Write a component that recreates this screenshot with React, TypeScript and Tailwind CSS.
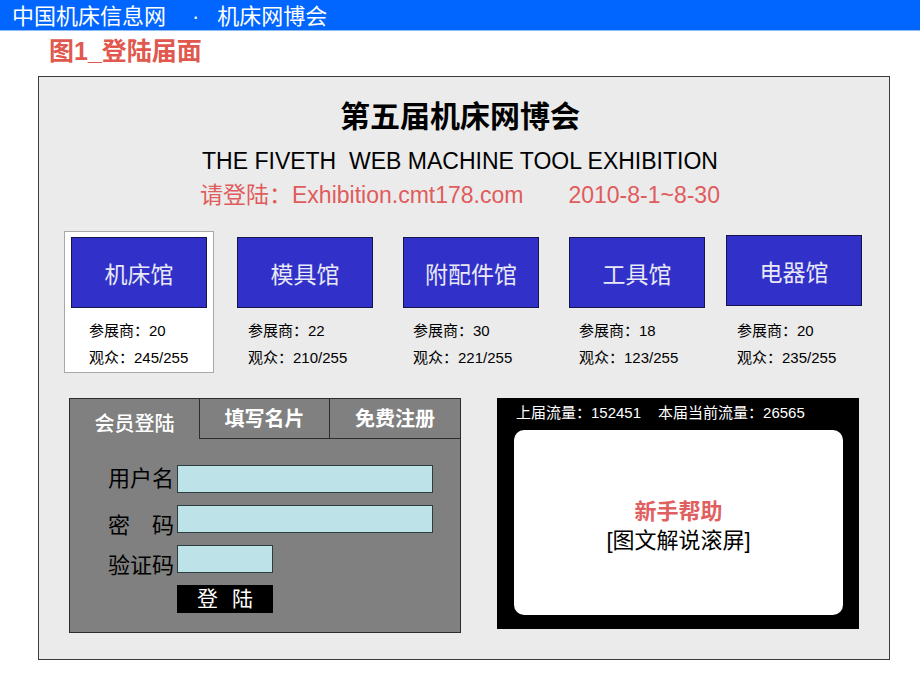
import React from 'react'

const halls = [
  { name: '机床馆', exhibitors: 20, visitors: '245/255' },
  { name: '模具馆', exhibitors: 22, visitors: '210/255' },
  { name: '附配件馆', exhibitors: 30, visitors: '221/255' },
  { name: '工具馆', exhibitors: 18, visitors: '123/255' },
  { name: '电器馆', exhibitors: 20, visitors: '235/255' },
]

function HallBox({ name }: { name: string }) {
  return (
    <div className="w-[136px] h-[71px] bg-[#3131c9] border border-[#15154a] flex items-center justify-center pt-[6px] text-[23px] text-[#e8e8f6]">
      {name}
    </div>
  )
}

function HallStats({ exhibitors, visitors, pad }: { exhibitors: number; visitors: string; pad: string }) {
  return (
    <div className={`${pad} mt-[9px] text-[15px] leading-[27px] text-black`}>
      <div>参展商：{exhibitors}</div>
      <div>观众：{visitors}</div>
    </div>
  )
}

export default function App() {
  return (
    <div className="w-[920px] h-[690px] bg-white overflow-hidden [font-family:'Liberation_Sans','Noto_Sans_CJK_SC',sans-serif]">
      {/* top bar */}
      <div className="h-[31px] bg-[#0066ff] border-b border-[#8cbcf2] pl-[12px] pt-[4px] text-[22px] leading-[26px] text-white flex">
        <span>中国机床信息网</span>
        <span className="ml-[26px] mr-[18px]">·</span>
        <span>机床网博会</span>
      </div>
      <div className="h-[45px] pl-[49px] pt-[5px] text-[25px] leading-[30px] font-bold text-[#e0584e]">
        图1_登陆届面
      </div>

      {/* main panel */}
      <div className="ml-[38px] w-[852px] h-[584px] bg-[#ebebeb] border border-[#3c3c3c]">
        <div className="flex flex-col items-center pr-[8px]">
          <div className="mt-[22px] text-[30px] leading-[36px] font-bold text-black">第五届机床网博会</div>
          <div className="mt-[12px] text-[23px] leading-[28px] text-black whitespace-pre">
            THE FIVETH  WEB MACHINE TOOL EXHIBITION
          </div>
          <div className="mt-[6px] text-[23px] leading-[28px] text-[#e05c5c]">
            请登陆：Exhibition.cmt178.com<span className="ml-[45px]">2010-8-1~8-30</span>
          </div>
        </div>

        {/* halls */}
        <div className="mt-[22px] flex items-start">
          <div className="ml-[25px] w-[150px] h-[142px] bg-white border border-[#a8a8a8] pt-[5px] pl-[6px]">
            <HallBox name={halls[0].name} />
            <HallStats exhibitors={halls[0].exhibitors} visitors={halls[0].visitors} pad="pl-[18px]" />
          </div>
          <div className="ml-[23px] mt-[6px]">
            <HallBox name={halls[1].name} />
            <HallStats exhibitors={halls[1].exhibitors} visitors={halls[1].visitors} pad="pl-[11px]" />
          </div>
          <div className="ml-[30px] mt-[6px]">
            <HallBox name={halls[2].name} />
            <HallStats exhibitors={halls[2].exhibitors} visitors={halls[2].visitors} pad="pl-[10px]" />
          </div>
          <div className="ml-[30px] mt-[6px]">
            <HallBox name={halls[3].name} />
            <HallStats exhibitors={halls[3].exhibitors} visitors={halls[3].visitors} pad="pl-[10px]" />
          </div>
          <div className="ml-[21px] mt-[4px]">
            <HallBox name={halls[4].name} />
            <div className="pl-[11px] mt-[11px] text-[15px] leading-[27px] text-black">
              <div>参展商：{halls[4].exhibitors}</div>
              <div>观众：{halls[4].visitors}</div>
            </div>
          </div>
        </div>

        {/* bottom row */}
        <div className="mt-[25px] flex items-start">
          {/* login */}
          <div className="ml-[30px] w-[392px] h-[235px] bg-[#808080] border border-[#2c2c2c]">
            <div className="flex h-[40px] text-[20px] text-white">
              <div className="w-[129px] flex justify-center pt-[12px] leading-[26px] font-medium">会员登陆</div>
              <div className="w-[130px] border-l border-b border-[#2c2c2c] flex justify-center pt-[7px] leading-[26px] font-bold">填写名片</div>
              <div className="flex-1 border-l border-b border-[#2c2c2c] flex justify-center pt-[7px] leading-[26px] font-bold">免费注册</div>
            </div>

            <div className="mt-[26px] pl-[38px] text-[22px] text-black">
              <div className="flex items-start">
                <div className="w-[69px] leading-[28px]">用户名</div>
                <input readOnly className="w-[256px] h-[28px] bg-[#bde3e8] border border-[#2d3d40] outline-none" />
              </div>
              <div className="mt-[12px] flex items-start">
                <div className="w-[69px] pr-[3px] translate-y-[7px] leading-[28px] flex justify-between">
                  <span>密</span>
                  <span>码</span>
                </div>
                <input readOnly type="password" className="w-[256px] h-[28px] bg-[#bde3e8] border border-[#2d3d40] outline-none" />
              </div>
              <div className="mt-[12px] flex items-start">
                <div className="w-[69px] translate-y-[7px] leading-[28px]">验证码</div>
                <input readOnly className="w-[96px] h-[28px] bg-[#bde3e8] border border-[#2d3d40] outline-none" />
              </div>
              <button className="mt-[12px] ml-[69px] w-[96px] h-[28px] bg-black text-white text-[21px] leading-[28px] flex justify-center gap-[14px]">
                <span>登</span>
                <span>陆</span>
              </button>
            </div>
          </div>

          {/* traffic / help */}
          <div className="ml-[36px] w-[362px] h-[231px] bg-black">
            <div className="pl-[19px] pt-[5px] text-[15px] leading-[20px] text-white">
              上届流量：152451<span className="ml-[17px]">本届当前流量：26565</span>
            </div>
            <div className="mt-[7px] ml-[17px] w-[329px] h-[185px] bg-white rounded-[10px] flex flex-col items-center justify-center pt-[6px] text-[22px] leading-[29px]">
              <div className="font-bold text-[#e06060]">新手帮助</div>
              <div className="text-black">[图文解说滚屏]</div>
            </div>
          </div>
        </div>
      </div>
    </div>
  )
}
